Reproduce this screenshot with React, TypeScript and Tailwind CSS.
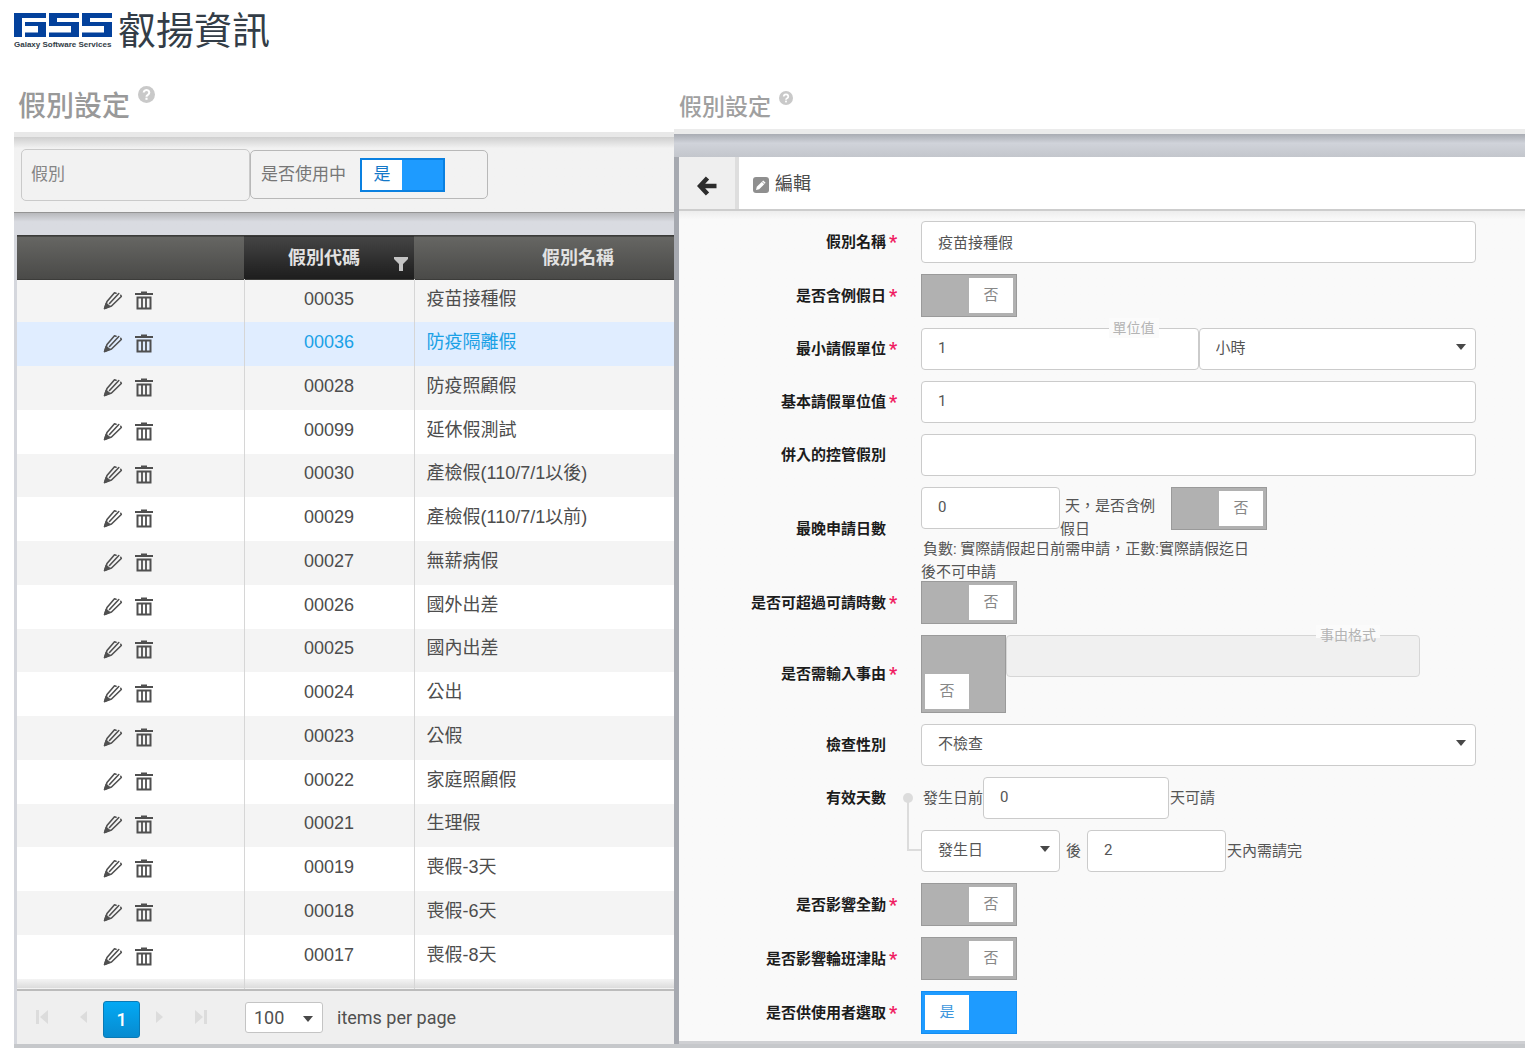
import React, { useState } from 'react';

interface LeaveType {
  code: string;
  name: string;
}

const LEAVE_TYPES: LeaveType[] = [
  { code: '00035', name: '疫苗接種假' },
  { code: '00036', name: '防疫隔離假' },
  { code: '00028', name: '防疫照顧假' },
  { code: '00099', name: '延休假測試' },
  { code: '00030', name: '產檢假(110/7/1以後)' },
  { code: '00029', name: '產檢假(110/7/1以前)' },
  { code: '00027', name: '無薪病假' },
  { code: '00026', name: '國外出差' },
  { code: '00025', name: '國內出差' },
  { code: '00024', name: '公出' },
  { code: '00023', name: '公假' },
  { code: '00022', name: '家庭照顧假' },
  { code: '00021', name: '生理假' },
  { code: '00019', name: '喪假-3天' },
  { code: '00018', name: '喪假-6天' },
  { code: '00017', name: '喪假-8天' },
];

const INPUT = 'h-[42px] min-w-0 rounded-[4px] border border-[#cbcbcb] bg-white px-4 pb-0.5 text-[15px] leading-6 text-[#555] outline-none';

const Logo = () => (
  <div className="flex items-center gap-1.5">
    <div className="w-[98px]">
      <svg viewBox="0 0 98 25" className="block h-[25px] w-full" fill="#03419c" aria-label="GSS">
        <path d="M0 0H32V5H8V24H0Z" />
        <path d="M11 9H32V24H11V19.500H24V13H11Z" />
        <path d="M35 0H65V5H43V9H65V24H35V19.500H57V13H35Z" />
        <path d="M68 0H98V5H76V9H98V24H68V19.500H90V13H68Z" />
      </svg>
      <div className="mt-0.5 whitespace-nowrap font-['Liberation_Sans',sans-serif] text-[8px] font-bold leading-[10px] text-[#333d47]">
        Galaxy Software Services
      </div>
    </div>
    <span className="text-[38px] leading-[46px] text-[#333d47]">叡揚資訊</span>
  </div>
);

const HelpIcon = ({ className }: { className: string }) => (
  <svg viewBox="0 0 16 16" className={className} aria-label="說明">
    <circle cx="8" cy="8" r="8" fill="#c9c9c9" />
    <path d="M5.4 6.2a2.6 2.4 0 1 1 3.9 2.1C8.4 8.8 8 9.1 8 10" fill="none" stroke="#fff" strokeWidth="2" />
    <rect x="7" y="11" width="2" height="2" fill="#fff" />
  </svg>
);

const PencilIcon = () => (
  <svg viewBox="0 0 20 20" className="size-5" fill="none" stroke="#505050" strokeWidth="1.6" strokeLinejoin="round" strokeLinecap="round">
    <path d="M13 2.200 11.500 1.800 4 10.500 1.600 17.400 8.500 15 18.300 5.500 17.800 4.300" />
    <path d="M15.800 2.500 6.500 12.500" />
    <path d="M3.200 12.500 6.500 15.300 1.600 17.400Z" fill="#505050" />
  </svg>
);

const TrashIcon = () => (
  <svg viewBox="0 0 18 20" className="h-5 w-[18px]" fill="none" stroke="#4f4f4f">
    <path d="M0 3H18" strokeWidth="2" />
    <path d="M6 1.500H12" strokeWidth="2" />
    <path d="M2.500 6.500H15.500V17.500H2.500Z" strokeWidth="2" />
    <path d="M7 7V17M11 7V17" strokeWidth="1.800" />
  </svg>
);

const Caret = () => (
  <svg viewBox="0 0 10 6" className="pointer-events-none absolute right-2.5 top-4 h-1.5 w-2.5" fill="#484848">
    <path d="M0 0H10L5 6Z" />
  </svg>
);

interface ToggleProps {
  id: string;
  initial?: boolean;
  label?: string;
}

const Toggle: React.FC<ToggleProps> = ({ id, initial = false, label }) => {
  const [on, setOn] = useState(initial);
  return (
    <button
      id={id}
      type="button"
      role="switch"
      aria-checked={on}
      aria-label={label}
      onClick={() => setOn(!on)}
      className={`flex h-[43px] w-24 shrink-0 border p-[3px] text-[15px] ${
        on ? 'justify-start border-[#148df2] bg-[#1e9bff] text-[#3c96dc]' : 'justify-end border-[#9a9a9a] bg-[#b1b1b1] text-[#888]'
      }`}
    >
      <span className="flex h-full w-11 items-center justify-center bg-white">{on ? '是' : '否'}</span>
    </button>
  );
};

interface FieldProps {
  label: string;
  htmlFor: string;
  required?: boolean;
  children: React.ReactNode;
}

const Field: React.FC<FieldProps> = ({ label, htmlFor, required, children }) => (
  <div className="grid grid-cols-[207px_35px_minmax(0,1fr)] items-center">
    <label htmlFor={htmlFor} className="text-right text-[15px] font-bold leading-6 text-[#1c1c1c]">
      {label}
    </label>
    <span className="pl-[3px] text-[18px] font-bold leading-6 text-[#f01e63]">{required && '*'}</span>
    <div className="min-w-0">{children}</div>
  </div>
);

const rowColor = (item: LeaveType, i: number) => {
  if (item.code === '00036') return 'bg-[#e0edff] text-[#1ba1e6]';
  return i % 2 === 0 ? 'bg-[#f4f4f4]' : 'bg-white';
};

const rowHeight = (i: number) => {
  if (i === 0) return 'h-[42px]';
  return i % 4 === 0 ? 'h-[43px]' : 'h-11';
};

const LeaveList = () => (
  <section className="flex min-w-0 flex-col">
    <div className="flex h-[60px] pl-[18px]">
      <h1 className="text-[28px] font-medium leading-[70px] text-[#999]">假別設定</h1>
      <HelpIcon className="ml-2 mt-3.5 size-[17px]" />
    </div>
    <div className="ml-3.5 flex flex-1 flex-col bg-[#d5d7dd]">
      <div className="h-[5px] bg-[#e8e8e8]" />
      <div className="flex h-[76px] items-start border-b border-[#949494] bg-linear-to-b from-[#cfcfcf] via-[#f2f2f2] via-15% to-[#f2f2f2] pl-[7px] pt-3">
        <input
          aria-label="假別"
          placeholder="假別"
          className="h-[52px] w-[229px] rounded-[5px] border border-[#cacaca] bg-[#f2f2f2] px-[9px] pb-0.5 text-[17px] leading-6 outline-none placeholder:text-[#858585]"
        />
        <div className="mt-px flex h-[49px] w-[238px] items-center rounded-[5px] border border-[#b8b8b8] pl-2.5">
          <label htmlFor="in-use" className="text-[17px] text-[#777]">是否使用中</label>
          <button
            id="in-use"
            type="button"
            role="switch"
            aria-checked="true"
            className="ml-3.5 flex h-[34px] w-[85px] border-2 border-[#0a80e0] bg-[#1e9bff] text-[17px] text-[#1478c8]"
          >
            <span className="flex h-full w-10 items-center justify-center bg-white">是</span>
          </button>
        </div>
      </div>
      <div className="h-[22px] bg-linear-to-b from-[#b8b9bc] to-[#d9dbe1] to-40%" />
      <table className="ml-[3px] table-fixed border-collapse">
        <colgroup>
          <col className="w-[227px]" />
          <col className="w-[170px]" />
          <col />
        </colgroup>
        <thead>
          <tr className="h-11 border-y border-[#3c3c3a] bg-linear-to-b from-[#666663] to-[#4a4a48] text-[18px] text-[#e2e2e2]">
            <th />
            <th className="bg-linear-to-b from-[#454545] to-[#1d1d1d] p-0">
              <div className="flex items-center pl-11">
                <span>假別代碼</span>
                <svg viewBox="0 0 14 14" className="ml-auto mr-1.5 mt-3 size-3.5" fill="#c4c4c4">
                  <path d="M0 0H14V2L9 7V14H5V7L0 2Z" />
                </svg>
              </div>
            </th>
            <th className="p-0 pl-17 text-center">假別名稱</th>
          </tr>
        </thead>
        <tbody className="font-['Liberation_Sans','Noto_Sans_CJK_TC',sans-serif] text-[18px] leading-6 text-[#4d4d4d]">
          {LEAVE_TYPES.map((item, i) => (
            <tr key={item.code} className={`${rowHeight(i)} ${rowColor(item, i)}`}>
              <td className="border-r border-[#d6d6d6] p-0">
                <div className="flex items-center justify-center gap-3 pr-1">
                  <button type="button" aria-label={`編輯 ${item.name}`}><PencilIcon /></button>
                  <button type="button" aria-label={`刪除 ${item.name}`}><TrashIcon /></button>
                </div>
              </td>
              <td className="border-r border-[#d6d6d6] p-0 pb-1 text-center">{item.code}</td>
              <td className="truncate p-0 pb-1 pl-3">{item.name}</td>
            </tr>
          ))}
          <tr className="h-[11px] border-b-2 border-[#bcbcbc] bg-linear-to-b from-[#f4f4f4] to-[#dcdcdc]">
            <td className="border-r border-r-[#d6d6d6] p-0" />
            <td className="border-r border-r-[#d6d6d6] p-0" />
            <td className="p-0" />
          </tr>
        </tbody>
      </table>
      <div className="ml-[3px] flex h-[53px] items-center bg-[#efefef] text-[18px] text-[#505050]">
        <button type="button" aria-label="第一頁" className="ml-[19px]">
          <svg viewBox="0 0 12 14" className="h-4 w-3" fill="#dcdcdc"><path d="M0 0H3V14H0ZM12 0V14L4 7Z" /></svg>
        </button>
        <button type="button" aria-label="上一頁" className="ml-8">
          <svg viewBox="0 0 7 12" className="h-3 w-[7px]" fill="#dcdcdc"><path d="M7 0V12L0 6Z" /></svg>
        </button>
        <button
          type="button"
          className="ml-4 mt-1 h-[37px] w-[37px] rounded-[3px] border border-[#0a7ab5] bg-linear-to-b from-[#03a9f4] to-[#078bd0] font-medium text-white"
        >
          1
        </button>
        <button type="button" aria-label="下一頁" className="ml-4">
          <svg viewBox="0 0 7 12" className="h-3 w-[7px]" fill="#dcdcdc"><path d="M0 0V12L7 6Z" /></svg>
        </button>
        <button type="button" aria-label="最後一頁" className="ml-8">
          <svg viewBox="0 0 12 14" className="h-4 w-3" fill="#dcdcdc"><path d="M12 0H9V14H12ZM0 0V14L8 7Z" /></svg>
        </button>
        <div className="relative ml-[38px]">
          <select id="page-size" defaultValue="100" className="h-[31px] w-[78px] appearance-none rounded-[3px] border border-[#c4c4c4] bg-white pl-2 outline-none">
            <option>50</option>
            <option>100</option>
          </select>
          <svg viewBox="0 0 10 6" className="pointer-events-none absolute right-2.5 top-3.5 h-1.5 w-2.5" fill="#484848">
            <path d="M0 0H10L5 6Z" />
          </svg>
        </div>
        <label htmlFor="page-size" className="ml-3.5">items per page</label>
      </div>
    </div>
  </section>
);

const EditPanel = () => (
  <section className="flex min-w-0 flex-col">
    <div className="flex h-[57px] pl-[5px]">
      <h1 className="text-[23px] font-medium leading-[72px] text-[#a0a0a0]">假別設定</h1>
      <HelpIcon className="ml-2 mt-[19px] size-3.5" />
    </div>
    <div className="h-[5px] bg-[#ebebeb]" />
    <div className="flex flex-1 flex-col bg-[#a6a9b0] pl-[5px]">
      <div className="-ml-[5px] h-[23px] bg-linear-to-b from-[#a9acb3] via-[#d0d3da] via-40% to-[#c3c6cc]" />
      <div className="flex h-[54px] shrink-0 items-stretch border-b-2 border-[#cdcdcd] bg-white">
        <button type="button" aria-label="返回" className="flex w-[60px] items-center justify-center border-r-4 border-[#dedede] bg-[#efefef] pt-1.5">
          <svg viewBox="0 0 20 20" className="size-5" fill="none" stroke="#2c2c2c" strokeWidth="4.500">
            <path d="M10.500 2 3 10 10.500 18M3.500 10H19.500" />
          </svg>
        </button>
        <div className="flex items-center gap-1.5 pl-3.5">
          <svg viewBox="0 0 16 16" className="mt-1 size-4">
            <rect width="16" height="16" rx="3" fill="#8f8f8f" />
            <path d="M3 13 3.800 9.800 10.200 3.400 12.600 5.800 6.200 12.200Z" fill="#fff" />
            <path d="M9 4.600 11.400 7" stroke="#8f8f8f" strokeWidth="0.800" />
          </svg>
          <h2 className="text-[18px] text-[#4c4c4c]">編輯</h2>
        </div>
      </div>
      <form className="flex flex-1 flex-col gap-[11px] border-b-3 border-[#cfd0d3] bg-linear-to-b from-[#ededed] via-[#f9f9f9] via-1% to-[#f9f9f9] pb-1.5 pr-[49px] pt-2.5">
        <Field label="假別名稱" htmlFor="name" required>
          <input id="name" defaultValue="疫苗接種假" className={`${INPUT} block w-full`} />
        </Field>
        <Field label="是否含例假日" htmlFor="holiday" required>
          <Toggle id="holiday" />
        </Field>
        <Field label="最小請假單位" htmlFor="min-unit" required>
          <div className="flex">
            <div className="relative flex flex-1">
              <input id="min-unit" defaultValue="1" className={`${INPUT} w-full`} />
              <span className="absolute -top-2.5 right-10 bg-[#fbfbfb] px-1 text-[14px] leading-5 text-[#b4b4b4]">單位值</span>
            </div>
            <div className="relative flex flex-1">
              <select aria-label="單位" className={`${INPUT} w-full appearance-none`}>
                <option>小時</option>
                <option>天</option>
              </select>
              <Caret />
            </div>
          </div>
        </Field>
        <Field label="基本請假單位值" htmlFor="base-unit" required>
          <input id="base-unit" defaultValue="1" className={`${INPUT} block w-full`} />
        </Field>
        <Field label="併入的控管假別" htmlFor="merge">
          <input id="merge" className={`${INPUT} block w-full`} />
        </Field>
        <Field label="最晚申請日數" htmlFor="deadline">
          {/* the second hint line runs into the gap below */}
          <div className="h-[83px] text-[15px] leading-[23px] text-[#555]">
            <div className="flex h-[51px] items-start">
              <input id="deadline" defaultValue="0" className={`${INPUT} w-[139px]`} />
              <p className="mr-[5px] w-[106px] pt-2 indent-[5px]">天，是否含例假日</p>
              <Toggle id="deadline-holiday" label="是否含例假日" />
            </div>
            <p className="w-[340px] indent-0.5">負數: 實際請假起日前需申請，正數:實際請假迄日後不可申請</p>
          </div>
        </Field>
        <Field label="是否可超過可請時數" htmlFor="exceed" required>
          <Toggle id="exceed" />
        </Field>
        <Field label="是否需輸入事由" htmlFor="reason" required>
          <div className="flex items-start pr-14">
            <button
              id="reason"
              type="button"
              role="switch"
              aria-checked="false"
              className="flex h-[78px] w-[85px] shrink-0 items-end border border-[#9a9a9a] bg-[#b1b1b1] p-[3px] text-[15px] text-[#888]"
            >
              <span className="flex h-[35px] w-11 items-center justify-center bg-white">否</span>
            </button>
            <div className="relative flex flex-1">
              <input id="reason-format" disabled className="h-[42px] w-full min-w-0 rounded-[4px] border border-[#d6d6d6] bg-[#f0f0f0]" />
              <label htmlFor="reason-format" className="absolute -top-2.5 right-10 bg-linear-to-b from-[#fbfbfb] from-65% to-[#f0f0f0] to-65% px-1 text-[14px] leading-5 text-[#b4b4b4]">
                事由格式
              </label>
            </div>
          </div>
        </Field>
        <Field label="檢查性別" htmlFor="gender">
          <div className="relative">
            <select id="gender" className={`${INPUT} block w-full appearance-none`}>
              <option>不檢查</option>
              <option>男</option>
              <option>女</option>
            </select>
            <Caret />
          </div>
        </Field>
        <Field label="有效天數" htmlFor="before-days">
          <div className="relative flex items-center text-[15px] text-[#555]">
            <span className="absolute -left-[18px] top-4 size-2.5 rounded-full bg-[#dcdcdc]" />
            <span className="absolute -left-3.5 top-5 h-[54px] w-3.5 border-b-2 border-l-2 border-[#dcdcdc]" />
            <span className="pl-0.5">發生日前</span>
            <input id="before-days" defaultValue="0" className={`${INPUT} w-[186px]`} />
            <span className="pl-px">天可請</span>
          </div>
        </Field>
        <div className="flex items-center pl-[242px] text-[15px] text-[#555]">
          <div className="relative">
            <select aria-label="起算日" className={`${INPUT} block w-[139px] appearance-none`}>
              <option>發生日</option>
            </select>
            <Caret />
          </div>
          <label htmlFor="after-days" className="px-1.5">後</label>
          <input id="after-days" defaultValue="2" className={`${INPUT} w-[139px]`} />
          <span className="pl-px">天內需請完</span>
        </div>
        <Field label="是否影響全勤" htmlFor="attendance" required>
          <Toggle id="attendance" />
        </Field>
        <Field label="是否影響輪班津貼" htmlFor="allowance" required>
          <Toggle id="allowance" />
        </Field>
        <Field label="是否供使用者選取" htmlFor="selectable" required>
          <Toggle id="selectable" initial />
        </Field>
      </form>
    </div>
  </section>
);

const App = () => (
  <div className="bg-white font-[Roboto,'Noto_Sans_CJK_TC',sans-serif]">
    <header className="flex h-[72px] items-start pl-3.5 pt-2">
      <Logo />
    </header>
    <main className="grid grid-cols-[674fr_851fr]">
      <LeaveList />
      <EditPanel />
    </main>
    <footer className="ml-3.5 h-1 bg-[#c6c8cb]" />
  </div>
);

export default App;
